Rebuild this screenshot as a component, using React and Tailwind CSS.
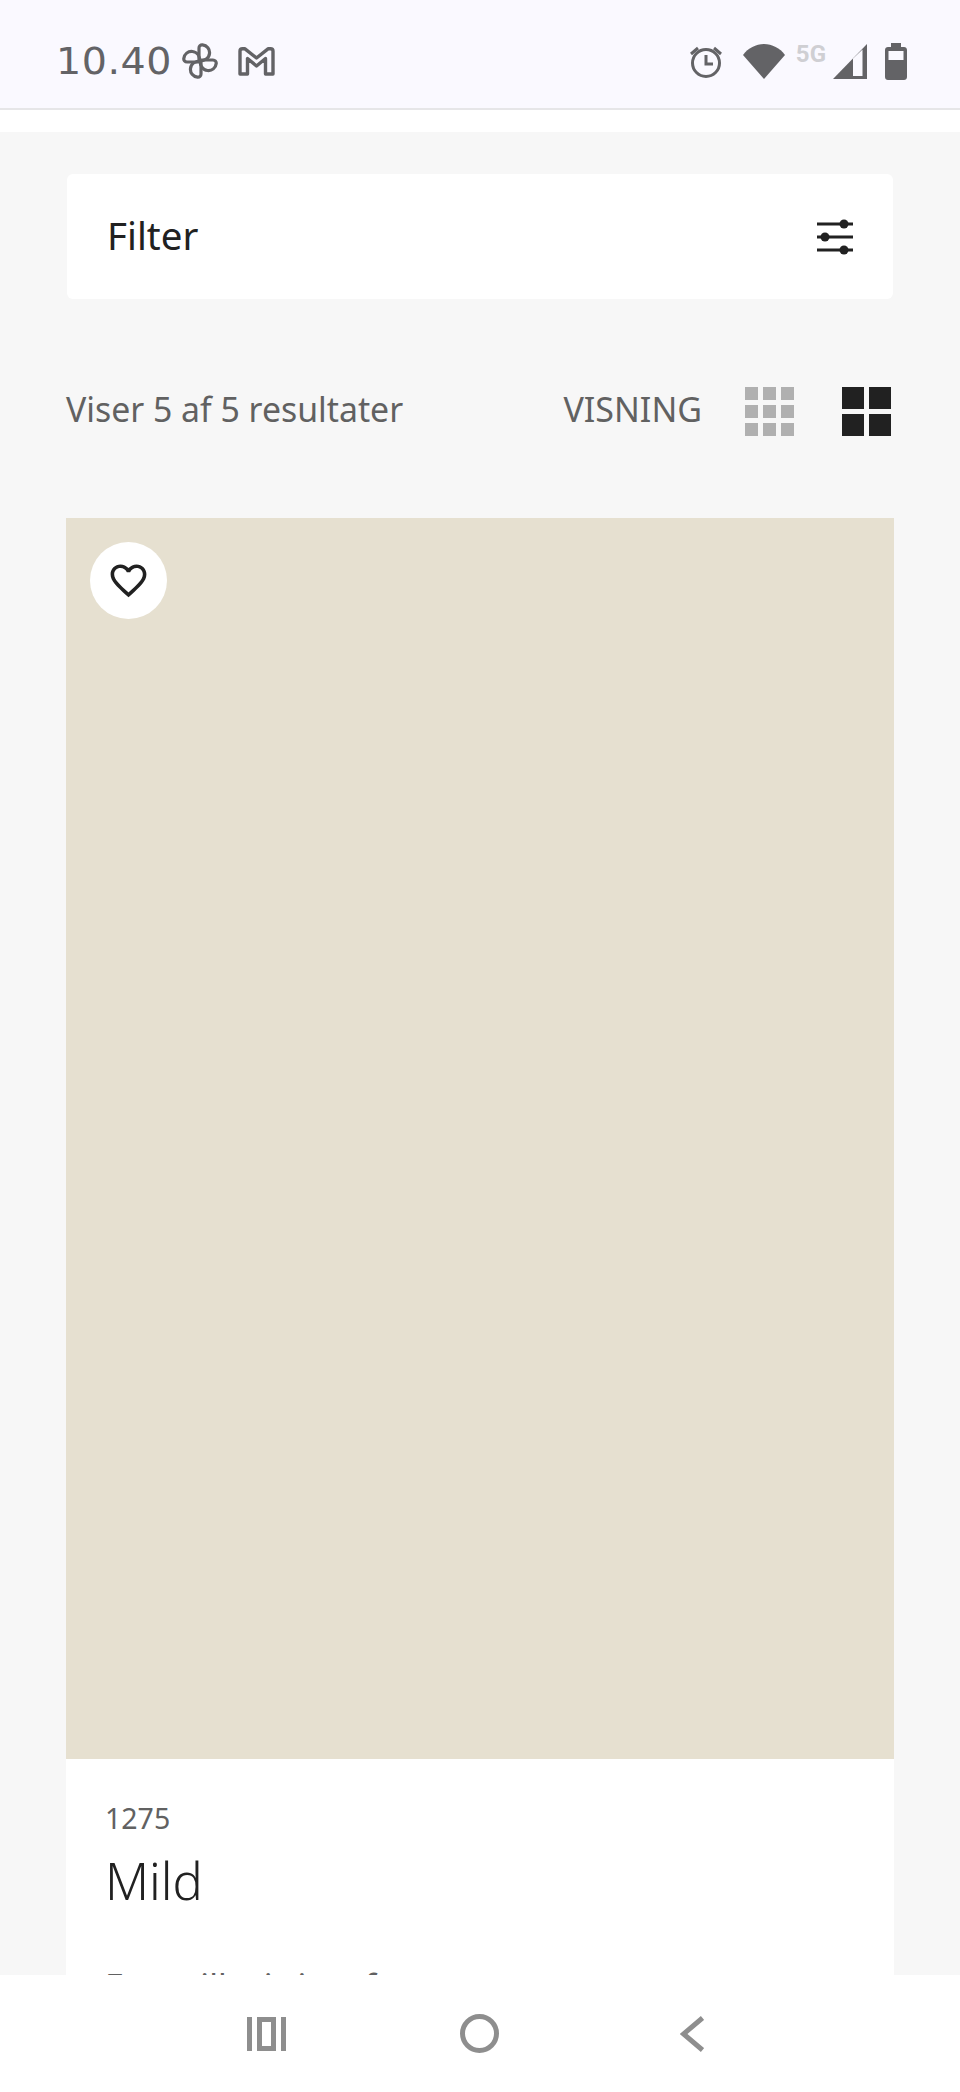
// App.jsx
import React from 'react';

const PETAL = 'M17 18V5c0-2 1.500-3.400 3.500-3.200C25 2.300 28 6 27.500 10.500 27 15 23 18 17 18z';

const Pinwheel = () => (
  <svg width="36" height="36" viewBox="0 0 36 36" fill="none" stroke="#636366" strokeWidth="3.2" strokeLinejoin="round">
    <path d={PETAL} />
    <path d={PETAL} transform="rotate(90 18 18)" />
    <path d={PETAL} transform="rotate(180 18 18)" />
    <path d={PETAL} transform="rotate(270 18 18)" />
  </svg>
);

const GmailIcon = () => (
  <svg width="37" height="29" viewBox="0 0 37 29" fill="none" stroke="#636366" strokeWidth="3.400" strokeLinejoin="round">
    <path d="M2 4c0-1.500 1-2.200 2.500-2.200H7L18.500 11 30 1.800h2.500C34 1.800 35 2.500 35 4v23h-7.500V11.500L18.500 19 9.500 11.500V27H2z" />
  </svg>
);

const AlarmIcon = () => (
  <svg width="34" height="33" viewBox="0 0 34 33" fill="none" stroke="#636366" strokeWidth="3">
    <circle cx="17" cy="18" r="13.500" />
    <path d="M17 10v9h7" />
    <path d="M2 9l7-6M32 9l-7-6" />
  </svg>
);

const WifiIcon = () => (
  <svg width="42" height="35" viewBox="0 0 42 35" fill="#636366">
    <path d="M21 35L0 11C5 4 13 0 21 0s16 4 21 11z" />
  </svg>
);

const SignalIcon = () => (
  <svg width="35" height="35" viewBox="0 0 35 35" fill="none">
    <path d="M0 35L34 0v35z" fill="#636366" />
    <path d="M20 32V14.500L29.500 5.500V32z" fill="#faf9ff" />
  </svg>
);

const BatteryIcon = () => (
  <svg width="22" height="37" viewBox="0 0 22 37" fill="#636366">
    <path d="M6 0h10v4h3c1.700 0 3 1.300 3 3v27c0 1.700-1.300 3-3 3H3c-1.700 0-3-1.300-3-3V7c0-1.700 1.300-3 3-3h3z" />
    <rect x="3.500" y="8" width="15" height="9" fill="#faf9ff" />
  </svg>
);

const FilterIcon = () => (
  <svg width="36" height="36" viewBox="0 0 36 36" fill="#212121">
    <rect x="0" y="3.500" width="36" height="3" />
    <rect x="0" y="16.500" width="36" height="3" />
    <rect x="0" y="29.500" width="36" height="3" />
    <circle cx="27" cy="5" r="4.500" />
    <circle cx="8" cy="18" r="4.500" />
    <circle cx="27" cy="31" r="4.500" />
  </svg>
);

const HeartIcon = () => (
  <svg width="43" height="43" viewBox="0 0 24 24" fill="#212121">
    <path d="M16.500 3c-1.740 0-3.410.81-4.500 2.090C10.910 3.810 9.240 3 7.500 3 4.420 3 2 5.420 2 8.500c0 3.780 3.400 6.860 8.550 11.540L12 21.350l1.450-1.320C18.600 15.360 22 12.280 22 8.500 22 5.420 19.580 3 16.500 3zm-4.400 15.550l-.1.100-.1-.1C7.140 14.240 4 11.390 4 8.500 4 6.500 5.500 5 7.500 5c1.540 0 3.040.99 3.570 2.360h1.870C13.460 5.990 14.960 5 16.500 5c2 0 3.500 1.500 3.500 3.500 0 2.890-3.140 5.740-7.900 10.050z" />
  </svg>
);

const RecentsIcon = () => (
  <svg width="39" height="34" viewBox="0 0 39 34" fill="#8e8e8e">
    <rect x="0" y="0" width="5" height="34" />
    <rect x="34" y="0" width="5" height="34" />
    <path fillRule="evenodd" d="M10 0h19v34H10zM15 5v24h9V5z" />
  </svg>
);

const HomeIcon = () => (
  <svg width="39" height="39" viewBox="0 0 39 39" fill="none" stroke="#8e8e8e" strokeWidth="5">
    <circle cx="19.500" cy="19.500" r="17" />
  </svg>
);

const BackIcon = () => (
  <svg width="24" height="36" viewBox="0 0 24 36" fill="none" stroke="#8e8e8e" strokeWidth="5">
    <path d="M22.500 2L3.500 18l19 16" />
  </svg>
);

const App = () => {
  return (
    <div className="flex h-[2092px] w-[960px] flex-col overflow-hidden bg-white font-['Noto_Sans','Open_Sans',sans-serif]">
      <div className="flex h-[110px] shrink-0 items-center justify-between border-b-2 border-[#e6e6e8] bg-[#faf9ff] pl-[56px] pr-[53px] pt-[14px]">
        <div className="flex items-center">
          <span className="mr-[18px] origin-left scale-x-[1.07] font-['DejaVu_Sans',sans-serif] text-[37px] leading-none tracking-[0.5px] text-[#636366]">10.40</span>
          <Pinwheel />
          <div className="ml-[20px]">
            <GmailIcon />
          </div>
        </div>
        <div className="flex items-center">
          <AlarmIcon />
          <div className="ml-[20px]">
            <WifiIcon />
          </div>
          <span className="mb-[14px] ml-[11px] font-['Roboto',sans-serif] text-[24px] font-bold leading-none text-[#cfcfd3]">5G</span>
          <div className="ml-[7px]">
            <SignalIcon />
          </div>
          <div className="ml-[17px]">
            <BatteryIcon />
          </div>
        </div>
      </div>

      <div className="h-[22px] shrink-0 bg-white" />

      <main className="min-h-0 flex-1 overflow-hidden bg-[#f7f7f7] px-[66px] pt-[42px]">
        <div className="mx-px flex h-[125px] items-center justify-between rounded-[6px] bg-white pl-[40px] pr-[40px]">
          <span className="pb-[2px] text-[38.500px] text-[#212121]">Filter</span>
          <FilterIcon />
        </div>

        <div className="flex h-[219px] items-center justify-between pr-[3px]">
          <span className="pt-[2px] text-[33.800px] text-[#616161]">Viser 5 af 5 resultater</span>
          <div className="flex items-center">
            <span className="mr-[43px] pt-[2px] text-[34px] text-[#616161]">VISNING</span>
            <div className="mr-[48px] mt-[5px] grid grid-cols-3 gap-[5px]">
              {Array.from({ length: 9 }).map((_, i) => (
                <div key={i} className="h-[13px] w-[13px] bg-[#b0b0b0]" />
              ))}
            </div>
            <div className="mt-[5px] grid grid-cols-2 gap-[5px]">
              {Array.from({ length: 4 }).map((_, i) => (
                <div key={i} className="h-[22px] w-[22px] bg-[#212121]" />
              ))}
            </div>
          </div>
        </div>

        <div className="bg-white">
          <div className="h-[1241px] bg-[#e6e0d0] pl-[24px] pt-[24px]">
            <div className="flex h-[77px] w-[77px] items-center justify-center rounded-full bg-white">
              <HeartIcon />
            </div>
          </div>
          <div className="px-[39px] pt-[39px]">
            <div className="text-[28.500px] leading-[40px] text-[#616161]">1275</div>
            <div className="mt-[7px] text-[50.500px] font-light leading-[72px] text-[#212121]">Mild</div>
            <p className="mt-[45px] text-[34px] leading-[48px] text-[#616161]">Fare villa, is i en farve</p>
          </div>
        </div>
      </main>

      <nav className="flex h-[117px] shrink-0 items-center bg-white pl-[247px]">
        <RecentsIcon />
        <div className="ml-[174px]">
          <HomeIcon />
        </div>
        <div className="ml-[181px]">
          <BackIcon />
        </div>
      </nav>
    </div>
  );
};

export default App;
